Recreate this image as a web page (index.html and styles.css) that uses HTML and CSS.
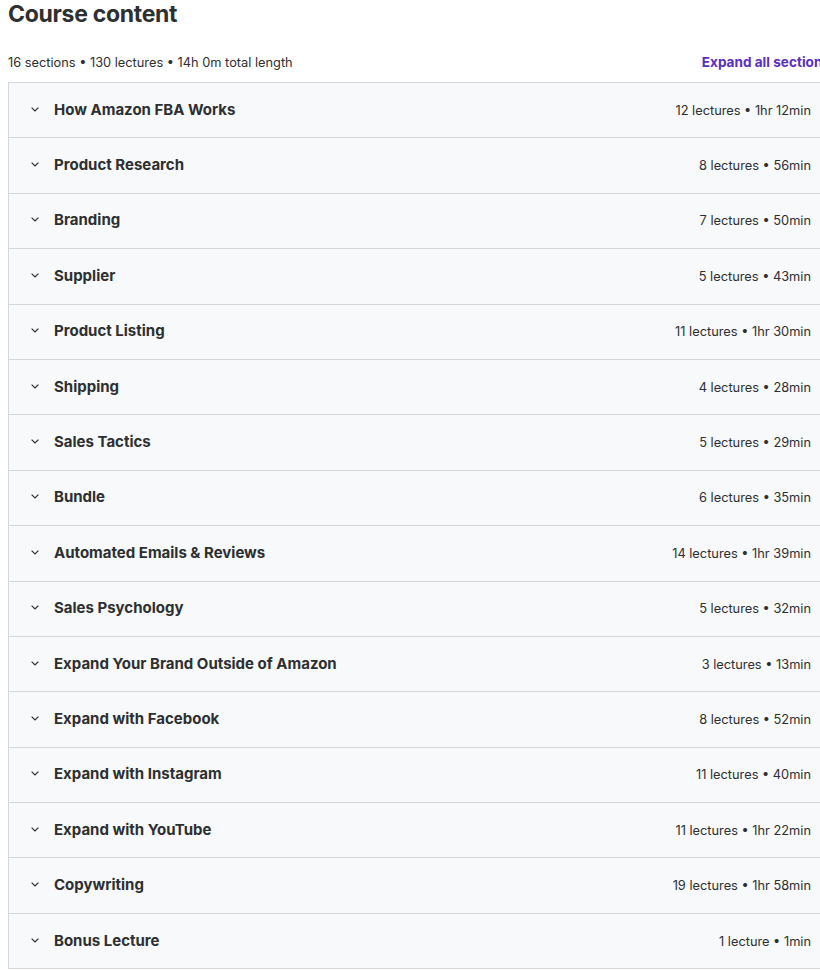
FILE: index.html
```html
<!DOCTYPE html>
<html>
<head>
<meta charset="utf-8">
<link rel="stylesheet" href="styles.css">
</head>
<body>
<div class="wrap">
  <h2 class="title">Course content</h2>
  <div class="summary">
    <span class="stats">16 sections • 130 lectures • 14h 0m total length</span>
    <span class="expand">Expand all sections</span>
  </div>
  <div class="list">
    <div class="row"><span class="chev"><svg width="8" height="5" viewBox="0 0 8 5"><path d="M0.6 0.6l3.4 3.4 3.4-3.4" fill="none" stroke="#2d2f31" stroke-width="1.2"/></svg></span><span class="name">How Amazon FBA Works</span><span class="info">12 lectures • 1hr 12min</span></div>
    <div class="row"><span class="chev"><svg width="8" height="5" viewBox="0 0 8 5"><path d="M0.6 0.6l3.4 3.4 3.4-3.4" fill="none" stroke="#2d2f31" stroke-width="1.2"/></svg></span><span class="name">Product Research</span><span class="info">8 lectures • 56min</span></div>
    <div class="row"><span class="chev"><svg width="8" height="5" viewBox="0 0 8 5"><path d="M0.6 0.6l3.4 3.4 3.4-3.4" fill="none" stroke="#2d2f31" stroke-width="1.2"/></svg></span><span class="name">Branding</span><span class="info">7 lectures • 50min</span></div>
    <div class="row"><span class="chev"><svg width="8" height="5" viewBox="0 0 8 5"><path d="M0.6 0.6l3.4 3.4 3.4-3.4" fill="none" stroke="#2d2f31" stroke-width="1.2"/></svg></span><span class="name">Supplier</span><span class="info">5 lectures • 43min</span></div>
    <div class="row"><span class="chev"><svg width="8" height="5" viewBox="0 0 8 5"><path d="M0.6 0.6l3.4 3.4 3.4-3.4" fill="none" stroke="#2d2f31" stroke-width="1.2"/></svg></span><span class="name">Product Listing</span><span class="info">11 lectures • 1hr 30min</span></div>
    <div class="row"><span class="chev"><svg width="8" height="5" viewBox="0 0 8 5"><path d="M0.6 0.6l3.4 3.4 3.4-3.4" fill="none" stroke="#2d2f31" stroke-width="1.2"/></svg></span><span class="name">Shipping</span><span class="info">4 lectures • 28min</span></div>
    <div class="row"><span class="chev"><svg width="8" height="5" viewBox="0 0 8 5"><path d="M0.6 0.6l3.4 3.4 3.4-3.4" fill="none" stroke="#2d2f31" stroke-width="1.2"/></svg></span><span class="name">Sales Tactics</span><span class="info">5 lectures • 29min</span></div>
    <div class="row"><span class="chev"><svg width="8" height="5" viewBox="0 0 8 5"><path d="M0.6 0.6l3.4 3.4 3.4-3.4" fill="none" stroke="#2d2f31" stroke-width="1.2"/></svg></span><span class="name">Bundle</span><span class="info">6 lectures • 35min</span></div>
    <div class="row"><span class="chev"><svg width="8" height="5" viewBox="0 0 8 5"><path d="M0.6 0.6l3.4 3.4 3.4-3.4" fill="none" stroke="#2d2f31" stroke-width="1.2"/></svg></span><span class="name">Automated Emails &amp; Reviews</span><span class="info">14 lectures • 1hr 39min</span></div>
    <div class="row"><span class="chev"><svg width="8" height="5" viewBox="0 0 8 5"><path d="M0.6 0.6l3.4 3.4 3.4-3.4" fill="none" stroke="#2d2f31" stroke-width="1.2"/></svg></span><span class="name">Sales Psychology</span><span class="info">5 lectures • 32min</span></div>
    <div class="row"><span class="chev"><svg width="8" height="5" viewBox="0 0 8 5"><path d="M0.6 0.6l3.4 3.4 3.4-3.4" fill="none" stroke="#2d2f31" stroke-width="1.2"/></svg></span><span class="name">Expand Your Brand Outside of Amazon</span><span class="info">3 lectures • 13min</span></div>
    <div class="row"><span class="chev"><svg width="8" height="5" viewBox="0 0 8 5"><path d="M0.6 0.6l3.4 3.4 3.4-3.4" fill="none" stroke="#2d2f31" stroke-width="1.2"/></svg></span><span class="name">Expand with Facebook</span><span class="info">8 lectures • 52min</span></div>
    <div class="row"><span class="chev"><svg width="8" height="5" viewBox="0 0 8 5"><path d="M0.6 0.6l3.4 3.4 3.4-3.4" fill="none" stroke="#2d2f31" stroke-width="1.2"/></svg></span><span class="name">Expand with Instagram</span><span class="info">11 lectures • 40min</span></div>
    <div class="row"><span class="chev"><svg width="8" height="5" viewBox="0 0 8 5"><path d="M0.6 0.6l3.4 3.4 3.4-3.4" fill="none" stroke="#2d2f31" stroke-width="1.2"/></svg></span><span class="name">Expand with YouTube</span><span class="info">11 lectures • 1hr 22min</span></div>
    <div class="row"><span class="chev"><svg width="8" height="5" viewBox="0 0 8 5"><path d="M0.6 0.6l3.4 3.4 3.4-3.4" fill="none" stroke="#2d2f31" stroke-width="1.2"/></svg></span><span class="name">Copywriting</span><span class="info">19 lectures • 1hr 58min</span></div>
    <div class="row"><span class="chev"><svg width="8" height="5" viewBox="0 0 8 5"><path d="M0.6 0.6l3.4 3.4 3.4-3.4" fill="none" stroke="#2d2f31" stroke-width="1.2"/></svg></span><span class="name">Bonus Lecture</span><span class="info">1 lecture • 1min</span></div>
  </div>
</div>
</body>
</html>
```
FILE: styles.css
```css
html, body {
  margin: 0;
  padding: 0;
  background: #ffffff;
  overflow: hidden;
}
body {
  font-family: Inter, "Noto Sans", sans-serif;
  color: #2d2f31;
}
.wrap {
  width: 828px;
  margin-left: 8px;
}
.title {
  margin: 0;
  font-size: 23px;
  font-weight: 700;
  line-height: 28px;
  letter-spacing: -0.3px;
  height: 28px;
  color: #2d2f31;
}
.summary {
  display: flex;
  justify-content: space-between;
  align-items: center;
  margin-top: 25px;
  height: 18px;
  margin-bottom: 11px;
  padding-right: 6px;
}
.stats {
  font-size: 12.8px;
  color: #2d2f31;
}
.expand {
  font-size: 13.6px;
  font-weight: 700;
  color: #5a2fc2;
  white-space: nowrap;
}
.list {
  border-top: 1px solid #d1d7dc;
  border-left: 1px solid #d1d7dc;
}
.row {
  display: flex;
  align-items: center;
  height: 55.4px;
  box-sizing: border-box;
  border-bottom: 1px solid #d1d7dc;
  background: #f7f9fa;
  padding: 0 25px 0 22px;
}
.chev {
  width: 23px;
  display: flex;
  align-items: center;
  margin-bottom: 2px;
}
.name {
  flex: 1;
  font-size: 15px;
  font-weight: 700;
  margin-bottom: 2px;
}
.info {
  font-size: 12.8px;
  color: #2d2f31;
}
```
